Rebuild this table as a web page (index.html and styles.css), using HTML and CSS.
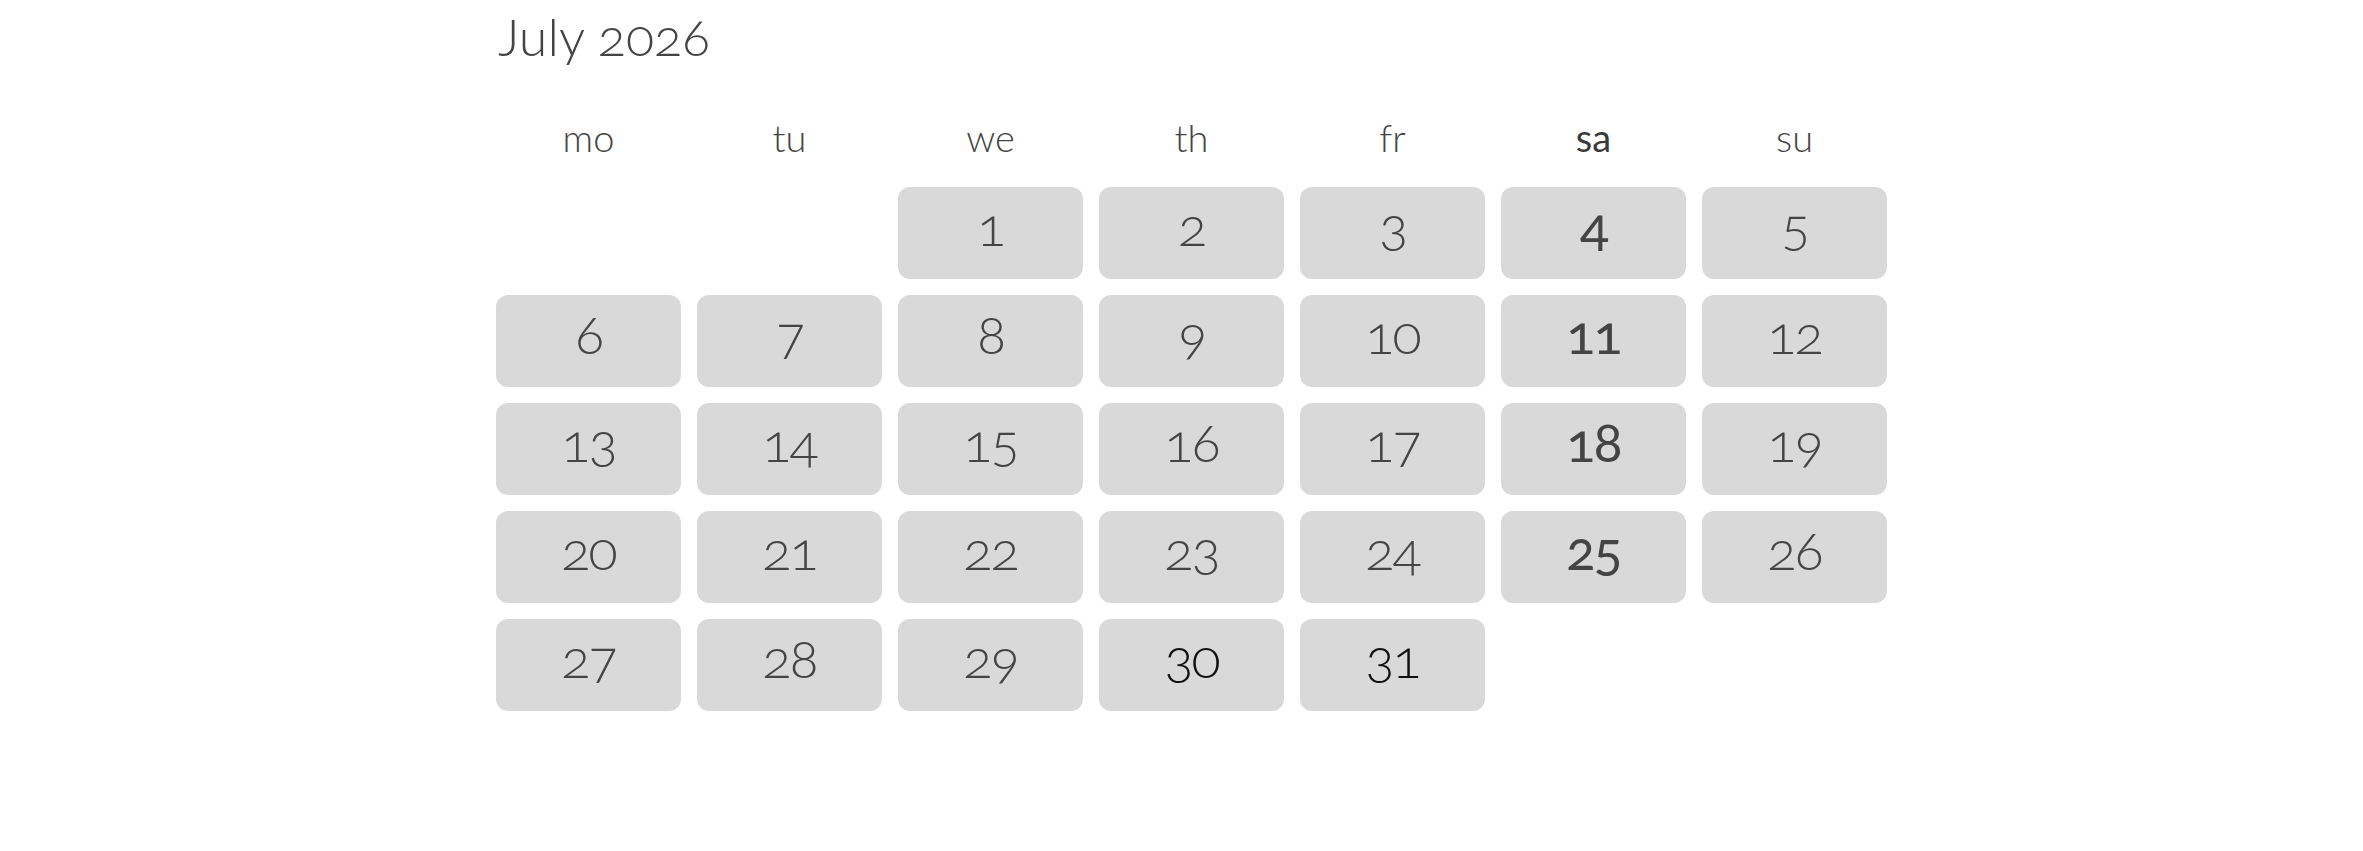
FILE: index.html
```html
<!DOCTYPE html>
<html lang="en">
<head>
<meta charset="utf-8">
<title>July 2026</title>
<link rel="stylesheet" href="styles.css">
</head>
<body>
<main class="calendar">
  <h1 class="calendar-title">July 2026</h1>
  <div class="weekdays">
    <div class="weekday">mo</div>
    <div class="weekday">tu</div>
    <div class="weekday">we</div>
    <div class="weekday">th</div>
    <div class="weekday">fr</div>
    <div class="weekday weekday-strong">sa</div>
    <div class="weekday">su</div>
  </div>
  <div class="days">
    <div class="day day-empty"></div>
    <div class="day day-empty"></div>
    <div class="day">1</div>
    <div class="day">2</div>
    <div class="day">3</div>
    <div class="day day-strong">4</div>
    <div class="day">5</div>
    <div class="day">6</div>
    <div class="day">7</div>
    <div class="day">8</div>
    <div class="day">9</div>
    <div class="day">10</div>
    <div class="day day-strong">11</div>
    <div class="day">12</div>
    <div class="day">13</div>
    <div class="day">14</div>
    <div class="day">15</div>
    <div class="day">16</div>
    <div class="day">17</div>
    <div class="day day-strong">18</div>
    <div class="day">19</div>
    <div class="day">20</div>
    <div class="day">21</div>
    <div class="day">22</div>
    <div class="day">23</div>
    <div class="day">24</div>
    <div class="day day-strong">25</div>
    <div class="day">26</div>
    <div class="day">27</div>
    <div class="day">28</div>
    <div class="day">29</div>
    <div class="day day-dark">30</div>
    <div class="day day-dark">31</div>
  </div>
</main>
</body>
</html>
```
FILE: styles.css
```css
html, body {
  margin: 0;
  padding: 0;
  background: #ffffff;
}

body {
  font-family: "Lato", "Noto Sans", sans-serif;
  font-weight: 300;
  color: #444444;
  font-variant-numeric: oldstyle-nums;
}

.calendar {
  margin-left: 496px;
  padding-top: 4px;
  width: 1391px;
}

.calendar-title {
  margin: 0;
  font-size: 52px;
  line-height: 64px;
  font-weight: 300;
  color: #444444;
  padding-left: 2px;
}

.weekdays {
  margin-top: 45px;
  display: grid;
  grid-template-columns: repeat(7, 185px);
  column-gap: 16px;
}

.weekday {
  text-align: center;
  font-size: 38px;
  line-height: 48px;
  color: #444444;
}

.weekday-strong {
  font-weight: 400;
  color: #3a3a3a;
}

.days {
  margin-top: 26px;
  display: grid;
  grid-template-columns: repeat(7, 185px);
  grid-auto-rows: 92px;
  gap: 16px;
}

.day {
  display: flex;
  align-items: center;
  justify-content: center;
  box-sizing: border-box;
  padding-bottom: 14px;
  background: #d9d9d9;
  border-radius: 12px;
  font-size: 54px;
  line-height: 1;
  letter-spacing: -2px;
  color: #444444;
}

.day-empty {
  background: transparent;
}

.day-strong {
  font-weight: 400;
  color: #444444;
}

.day-dark {
  color: #111111;
}
```
